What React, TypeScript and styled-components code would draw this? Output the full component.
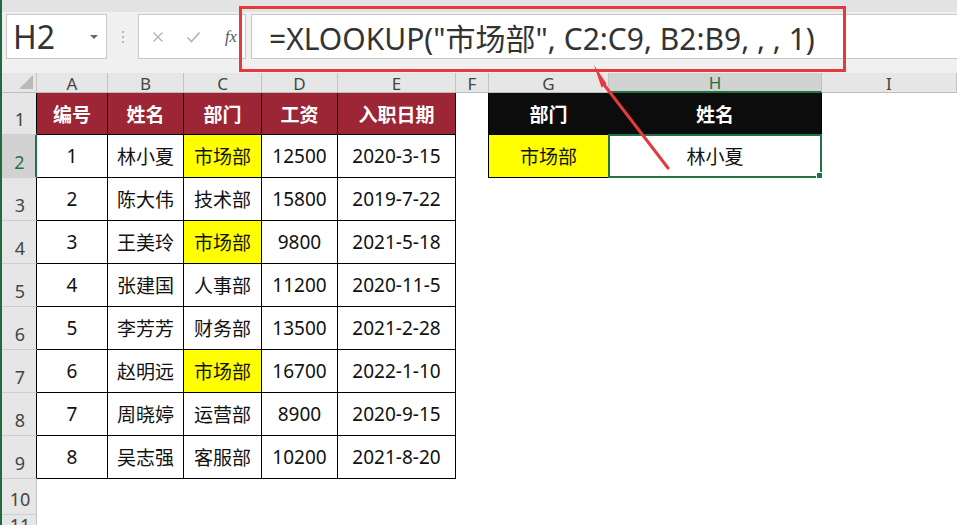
import React from 'react';
import styled, { createGlobalStyle } from 'styled-components';

const Global = createGlobalStyle`
  html, body { margin: 0; padding: 0; background: #fff; }
  body { font-family: "Noto Sans", "Noto Sans CJK SC", sans-serif; }
`;

const Root = styled.div`
  position: relative;
  width: 957px;
  height: 525px;
  overflow: hidden;
  display: flex;
  flex-direction: column;
  border-left: 2px solid #1f6a40;
  box-sizing: border-box;
  background: #fff;
`;

const TopStrip = styled.div`
  flex: none;
  height: 12px;
  background: #e3e3e3;
`;

const Toolbar = styled.div`
  flex: none;
  height: 61px;
  box-sizing: border-box;
  padding: 2px 0 0 4px;
  display: flex;
  align-items: flex-start;
  background: #f0f0f0;
`;

const NameBox = styled.div`
  position: relative;
  width: 101px;
  height: 45px;
  box-sizing: border-box;
  background: #fff;
  border: 1px solid #c8c8c8;
  display: flex;
  align-items: center;
  padding-left: 6px;
  font-size: 32px;
  color: #333;
  font-family: "Noto Sans", sans-serif;
`;

const Caret = styled.span`
  position: absolute;
  right: 8px;
  top: 20px;
  width: 0;
  height: 0;
  border-left: 4px solid transparent;
  border-right: 4px solid transparent;
  border-top: 4px solid #666;
`;

const Grip = styled.div`
  width: 31px;
  height: 45px;
  display: flex;
  align-items: center;
  justify-content: center;
`;

const Dots = styled.div`
  display: flex;
  flex-direction: column;
  gap: 3px;
  span {
    width: 2px;
    height: 2px;
    background: #b5b5b5;
  }
`;

const FxBox = styled.div`
  width: 108px;
  height: 45px;
  box-sizing: border-box;
  background: #fff;
  border: 1px solid #c8c8c8;
  display: flex;
  align-items: center;
  padding-left: 13px;
  gap: 22px;
`;

const FxText = styled.span`
  font-family: "Liberation Serif", serif;
  font-style: italic;
  font-size: 16px;
  color: #555;
  margin-left: 2px;
`;

const FormulaInput = styled.div`
  flex: 1;
  margin-left: 5px;
  height: 45px;
  box-sizing: border-box;
  background: #fff;
  border: 1px solid #c8c8c8;
  border-right: none;
  display: flex;
  align-items: center;
  padding-left: 17px;
  font-size: 30px;
  color: #333;
  white-space: nowrap;
  font-family: "Noto Sans", "Noto Sans CJK SC", sans-serif;
`;

const Sheet = styled.div`
  flex: 1;
  display: grid;
  grid-template-columns: 35px 71px 76px 78px 76px 118px 33px 120px 213px 1fr;
  grid-template-rows: 20px 42px repeat(8, 43px) 36px 1fr;
`;

const Corner = styled.div`
  position: relative;
  background: #e6e6e6;
  border-right: 1px solid #c4c4c4;
  border-bottom: 1px solid #bdbdbd;
  box-sizing: border-box;
  &::after {
    content: '';
    position: absolute;
    right: 3px;
    bottom: 3px;
    width: 0;
    height: 0;
    border-left: 14px solid transparent;
    border-bottom: 14px solid #b9b9b9;
  }
`;

const ColHead = styled.div<{ $active?: boolean }>`
  box-sizing: border-box;
  background: ${p => (p.$active ? '#d2d2d2' : '#e6e6e6')};
  color: ${p => (p.$active ? '#217346' : '#444')};
  border-right: 1px solid #c4c4c4;
  border-bottom: ${p => (p.$active ? '2px solid #217346' : '1px solid #bdbdbd')};
  display: flex;
  align-items: center;
  justify-content: center;
  font-size: 17px;
  line-height: 20px;
  padding-top: 2px;
`;

const RowHead = styled.div<{ $active?: boolean; $edge: string }>`
  box-sizing: border-box;
  background: ${p => (p.$active ? '#d2d2d2' : '#e6e6e6')};
  color: ${p => (p.$active ? '#217346' : '#444')};
  border-right: ${p => (p.$active ? '2px solid #217346' : `1px solid ${p.$edge}`)};
  border-bottom: 1px solid #cfcfcf;
  display: flex;
  align-items: flex-end;
  justify-content: center;
  font-size: 18px;
  line-height: 20px;
  padding-bottom: 5px;
  padding-left: 2px;
`;

const Cell = styled.div<{ $bg?: string; $fg?: string; $bold?: boolean; $r?: string; $b?: string }>`
  position: relative;
  box-sizing: border-box;
  background: ${p => p.$bg || '#fff'};
  color: ${p => p.$fg || '#111'};
  font-weight: ${p => (p.$bold ? 700 : 400)};
  border-right: ${p => (p.$r ? `1px solid ${p.$r}` : 'none')};
  border-bottom: ${p => (p.$b ? `1px solid ${p.$b}` : 'none')};
  display: flex;
  align-items: center;
  justify-content: center;
  font-size: 19px;
  white-space: nowrap;
  font-family: "Noto Sans", "Noto Sans CJK SC", sans-serif;
`;

const Selection = styled.div`
  position: absolute;
  top: -1px;
  left: -1px;
  right: -1px;
  bottom: -1px;
  border: 2px solid #217346;
  pointer-events: none;
`;

const Handle = styled.div`
  position: absolute;
  right: -5px;
  bottom: -5px;
  width: 7px;
  height: 7px;
  background: #217346;
  border: 1px solid #fff;
`;

const Highlight = styled.div`
  position: absolute;
  left: 237px;
  top: 6px;
  width: 607px;
  height: 66px;
  box-sizing: border-box;
  border: 3px solid #e6393d;
  pointer-events: none;
`;

const ArrowSvg = styled.svg`
  position: absolute;
  left: 578px;
  top: 55px;
  width: 100px;
  height: 125px;
  overflow: visible;
  pointer-events: none;
`;

type Spec = { text?: string; bg?: string; fg?: string; bold?: boolean; r?: string; b?: string; sel?: boolean };

const K = '#000';
const RED = '#9c2536';
const YEL = '#ffff00';

const data: [string, string, string, string, string][] = [
  ['1', '林小夏', '市场部', '12500', '2020-3-15'],
  ['2', '陈大伟', '技术部', '15800', '2019-7-22'],
  ['3', '王美玲', '市场部', '9800', '2021-5-18'],
  ['4', '张建国', '人事部', '11200', '2020-11-5'],
  ['5', '李芳芳', '财务部', '13500', '2021-2-28'],
  ['6', '赵明远', '市场部', '16700', '2022-1-10'],
  ['7', '周晓婷', '运营部', '8900', '2020-9-15'],
  ['8', '吴志强', '客服部', '10200', '2021-8-20'],
];

const cols = ['A', 'B', 'C', 'D', 'E', 'F', 'G', 'H', 'I'];

function buildRows(): Spec[][] {
  const rows: Spec[][] = [];
  const head = ['编号', '姓名', '部门', '工资', '入职日期'].map(t => ({ text: t, bg: RED, fg: '#fff', bold: true, r: K, b: K }));
  rows.push([
    ...head,
    { r: K },
    { text: '部门', bg: '#0c0c0c', fg: '#fff', bold: true, r: '#0c0c0c', b: K },
    { text: '姓名', bg: '#0c0c0c', fg: '#fff', bold: true, r: K, b: K },
    {},
  ]);
  data.forEach((d, i) => {
    const cells: Spec[] = d.map((t, j) => ({
      text: t,
      r: K,
      b: K,
      bg: j === 2 && t === '市场部' ? YEL : undefined,
    }));
    if (i === 0) {
      cells.push({ r: K }, { text: '市场部', bg: YEL, r: K, b: K }, { text: '林小夏', r: K, b: K, sel: true }, {});
    } else {
      cells.push({}, {}, {}, {});
    }
    rows.push(cells);
  });
  rows.push(cols.map(() => ({})));
  rows.push(cols.map(() => ({})));
  return rows;
}

const Cancel = () => (
  <svg width="12" height="12" viewBox="0 0 12 12">
    <path d="M1.5 1.5 L10.5 10.5 M10.5 1.5 L1.5 10.5" stroke="#b4b4b4" strokeWidth="1.4" fill="none" />
  </svg>
);

const Enter = () => (
  <svg width="15" height="12" viewBox="0 0 15 12">
    <path d="M1.5 6.5 L5.5 10.5 L13.5 1.5" stroke="#b4b4b4" strokeWidth="1.6" fill="none" />
  </svg>
);

export default function App() {
  const rows = buildRows();
  return (
    <>
      <Global />
      <Root>
        <TopStrip />
        <Toolbar>
          <NameBox>
            H2
            <Caret />
          </NameBox>
          <Grip>
            <Dots>
              <span />
              <span />
              <span />
            </Dots>
          </Grip>
          <FxBox>
            <Cancel />
            <Enter />
            <FxText>fx</FxText>
          </FxBox>
          <FormulaInput>=XLOOKUP("市场部", C2:C9, B2:B9, , , 1)</FormulaInput>
        </Toolbar>
        <Sheet>
          <Corner />
          {cols.map(c => (
            <ColHead key={c} $active={c === 'H'}>
              {c}
            </ColHead>
          ))}
          {rows.map((row, ri) => (
            <React.Fragment key={ri}>
              <RowHead $active={ri === 1} $edge={ri < 9 ? '#000' : '#c4c4c4'}>
                {ri + 1}
              </RowHead>
              {row.map((c, ci) => (
                <Cell key={ci} $bg={c.bg} $fg={c.fg} $bold={c.bold} $r={c.r} $b={c.b}>
                  {c.text}
                  {c.sel && (
                    <Selection>
                      <Handle />
                    </Selection>
                  )}
                </Cell>
              ))}
            </React.Fragment>
          ))}
        </Sheet>
        <Highlight />
        <ArrowSvg viewBox="0 0 100 125">
          <path d="M14 10 L21.5 32.5 L26.6 28.8 Z" fill="#e6393d" />
          <line x1="23.5" y1="29" x2="88" y2="113" stroke="#e6393d" strokeWidth="3" strokeLinecap="round" />
        </ArrowSvg>
      </Root>
    </>
  );
}
